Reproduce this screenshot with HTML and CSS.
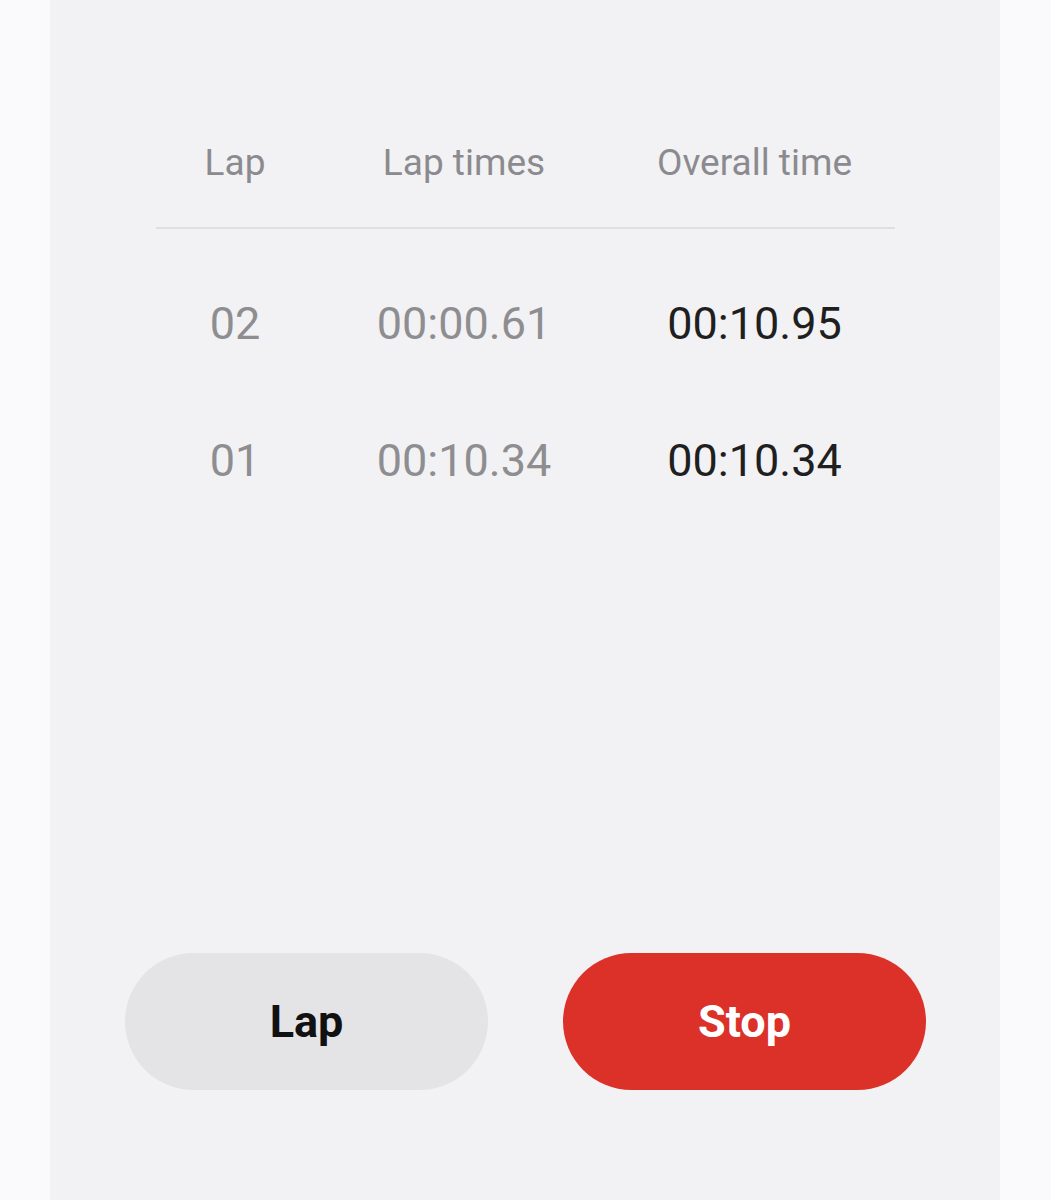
FILE: index.html
```html
<!DOCTYPE html>
<html lang="en">
<head>
    <meta charset="UTF-8">
    <meta name="viewport" content="width=device-width, initial-scale=1.0">
    <title>Stopwatch</title>
    <link rel="stylesheet" href="styles.css">
</head>
<body>

    <div class="panel">
        <div class="laps">
            <div class="lap-row head">
                <span>Lap</span>
                <span>Lap times</span>
                <span>Overall time</span>
            </div>
            <div class="lap-row">
                <span class="num">02</span>
                <span class="split">00:00.61</span>
                <span class="total">00:10.95</span>
            </div>
            <div class="lap-row">
                <span class="num">01</span>
                <span class="split">00:10.34</span>
                <span class="total">00:10.34</span>
            </div>
        </div>

        <div class="controls">
            <button class="btn lap">Lap</button>
            <button class="btn stop">Stop</button>
        </div>
    </div>

</body>
</html>
```

FILE: styles.css
```css
* {
    margin: 0;
    padding: 0;
    box-sizing: border-box;
    font-family: Roboto, 'Noto Sans', sans-serif;
}

body {
    background: #fafafc;
}

.panel {
    width: 950px;
    min-height: 1200px;
    margin-left: 50px;
    background: #f2f2f4;
    padding-top: 141px;
}

.laps {
    width: 739px;
    margin-left: 106px;
}

.lap-row {
    display: grid;
    grid-template-columns: 158px 300px 281px;
    text-align: center;
    font-size: 45px;
    line-height: 56px;
    margin-bottom: 81px;
}

.lap-row:last-child {
    margin-bottom: 0;
}

.lap-row.head {
    font-size: 37px;
    line-height: 44px;
    color: #8b8b8f;
    padding-bottom: 42px;
    border-bottom: 2px solid #dfdfe2;
    margin-bottom: 67px;
}

.num, .split {
    color: #8e8e91;
}

.total {
    color: #1f1f21;
}

.controls {
    display: flex;
    gap: 75px;
    margin-left: 75px;
    margin-top: 464px;
}

.btn {
    width: 363px;
    height: 137px;
    border: none;
    border-radius: 69px;
    font-size: 45px;
    font-weight: bold;
    cursor: pointer;
}

.btn.lap {
    background: #e4e4e7;
    color: #111;
}

.btn.stop {
    background: #db3129;
    color: #fff;
}
```
